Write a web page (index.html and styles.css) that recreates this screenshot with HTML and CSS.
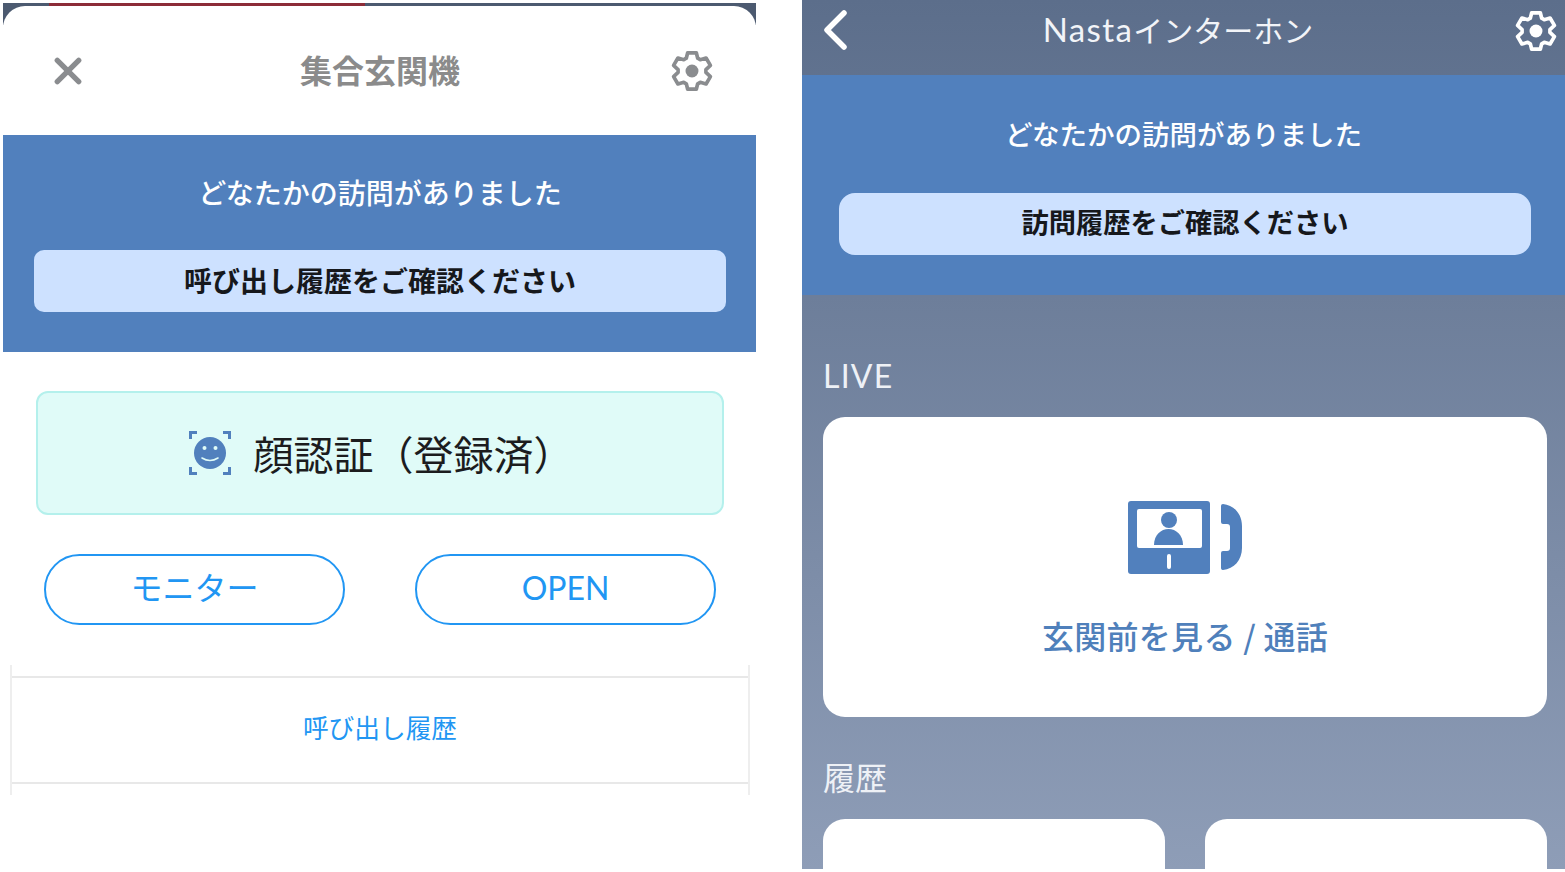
FILE: index.html
```html
<!DOCTYPE html>
<html lang="ja">
<head>
<meta charset="utf-8">
<title>Nastaインターホン</title>
<link rel="stylesheet" href="styles.css">
</head>
<body>
<svg class="defs" width="0" height="0" aria-hidden="true">
  <symbol id="gear" viewBox="0 0 24 24">
    <path class="gear-line" d="M8.75 4.69 9.53 1.6H14.47L15.25 4.69 16.7 5.53 20.04 4.6 22.52 8.78 19.96 11.16V12.84L22.52 15.22 20.04 19.4 16.7 18.47 15.25 19.31 14.47 22.4H9.53L8.75 19.31 7.3 18.47 3.96 19.4 1.48 15.22 4.04 12.84V11.16L1.48 8.78 3.96 4.6 7.3 5.53Z"/>
    <circle class="gear-dot" cx="12" cy="12" r="3.7"/>
  </symbol>
</svg>
<main class="page">
  <section class="sheet">
    <div class="sheet-edge"></div>
    <div class="sheet-inner">
      <header class="sheet-head">
        <svg class="close-icon" viewBox="0 0 28 28"><path d="M4 4 24 24M24 4 4 24"/></svg>
        <h1 class="sheet-title">集合玄関機</h1>
        <svg class="gear gear-gray"><use href="#gear"/></svg>
      </header>
      <div class="notice notice-left">
        <p class="notice-text">どなたかの訪問がありました</p>
        <div class="notice-pill pill-left">呼び出し履歴をご確認ください</div>
      </div>
      <div class="sheet-body">
        <div class="face-box">
          <svg class="face-icon" viewBox="0 0 42 44">
            <path class="face-corner" d="M1.5 8V1.5H8M34 1.5H40.5V8M40.5 36V42.5H34M8 42.5H1.5V36"/>
            <circle class="face-disc" cx="21" cy="22" r="16"/>
            <circle class="face-eye" cx="15.5" cy="17" r="2"/>
            <circle class="face-eye" cx="26.5" cy="17" r="2"/>
            <path class="face-smile" d="M13 27Q21 32 29 27"/>
          </svg>
          <span class="face-text">顔認証（登録済）</span>
        </div>
        <div class="actions">
          <button class="action">モニター</button>
          <button class="action action-latin">OPEN</button>
        </div>
      </div>
      <div class="history-row">
        <div class="history-cell">呼び出し履歴</div>
      </div>
    </div>
  </section>

  <section class="app">
    <header class="app-head">
      <svg class="back-icon" viewBox="0 0 26 40"><path d="M22 3 5 20 22 37"/></svg>
      <h2 class="app-title"><span class="latin nasta">Nasta</span>インターホン</h2>
      <svg class="gear gear-white"><use href="#gear"/></svg>
    </header>
    <div class="notice notice-right">
      <p class="notice-text">どなたかの訪問がありました</p>
      <div class="notice-pill pill-right">訪問履歴をご確認ください</div>
    </div>
    <div class="app-body">
      <h3 class="section-label label-live latin">LIVE</h3>
      <div class="live-card">
        <svg class="intercom" viewBox="0 0 114 75">
          <rect class="ic-blue" x="0" y="1" width="82" height="73" rx="3"/>
          <rect class="ic-white" x="9" y="9" width="65" height="39" rx="2"/>
          <circle class="ic-blue" cx="41" cy="20" r="8"/>
          <path class="ic-blue" d="M26 45C26 35 33 29 40.5 29 48 29 55 35 55 45Z"/>
          <rect class="ic-white" x="39" y="54" width="4" height="15" rx="2"/>
          <path class="ic-blue" d="M93 6Q93 4 95 4C106 5 114 14 114 26V48C114 60 106 69 95 70 93 70 93 68 93 68V53Q93 51 95 51H99Q102 51 102 48V27Q102 24 99 24H95Q93 24 93 22Z"/>
        </svg>
        <p class="live-text">玄関前を見る / 通話</p>
      </div>
      <h3 class="section-label label-history">履歴</h3>
      <div class="history-cards">
        <div class="history-card"></div>
        <div class="history-card"></div>
      </div>
    </div>
  </section>
</main>
</body>
</html>
```
FILE: styles.css
```css
* { box-sizing: border-box; }
html, body { margin: 0; padding: 0; background: #fff; }
body {
  width: 1565px;
  height: 872px;
  overflow: hidden;
  font-family: "Noto Sans CJK JP", "Noto Sans", sans-serif;
}
.defs { position: absolute; }
.latin { font-family: "Lato", "Noto Sans CJK JP", sans-serif; }
h1, h2, h3, p { margin: 0; font-weight: 400; }

.page { display: flex; align-items: flex-start; gap: 46px; padding-left: 3px; }

.gear { width: 42px; height: 42px; display: block; }
.gear-line { fill: none; stroke: currentColor; stroke-width: 2.1; stroke-linejoin: round; }
.gear-dot { fill: currentColor; }
.gear-gray { color: #8a8c8f; }
.gear-white { color: #fff; }

/* left sheet */
.sheet {
  position: relative;
  width: 753px;
  margin-top: 3px;
  padding-top: 3px;
  background: linear-gradient(#4c5a70 0, #4c5a70 22px, #fff 22px);
}
.sheet-edge {
  position: absolute;
  top: 0;
  left: 46px;
  width: 316px;
  height: 3px;
  background: #8c2c38;
}
.sheet-inner { background: #fff; border-radius: 22px 22px 0 0; }
.sheet-head {
  height: 129px;
  display: flex;
  align-items: center;
  justify-content: space-between;
  padding: 0 43px 0 50px;
}
.close-icon { width: 30px; height: 30px; fill: none; stroke: #8a8c8f; stroke-width: 5; stroke-linecap: round; }
.sheet-title { font-size: 32px; font-weight: 700; color: #8b8b8b; line-height: 1; margin: -4px 1px 0 7px; }

.notice {
  background: #5180bd;
  color: #fff;
  text-align: center;
}
.notice-text { font-size: 28px; font-weight: 500; line-height: 40px; }
.notice-left { height: 217px; padding: 37px 30px 0 31px; }
.notice-right { height: 220px; padding: 38px 34px 0 37px; }
.notice-right .notice-text { font-size: 27.5px; margin-left: -3px; }
.notice-pill {
  height: 62px;
  background: #cde1ff;
  color: #16181c;
  font-size: 28px;
  font-weight: 700;
}
.pill-left { margin-top: 38px; border-radius: 10px; line-height: 60px; }
.pill-right { margin-top: 40px; border-radius: 16px; font-size: 27.25px; line-height: 57px; }

.sheet-body { padding: 39px 32px 0 33px; }
.face-box {
  height: 124px;
  display: flex;
  align-items: center;
  justify-content: center;
  gap: 23px;
  background: #e0fbf8;
  border: 2px solid #b4f0ec;
  border-radius: 12px;
}
.face-icon { width: 42px; height: 44px; }
.face-corner { fill: none; stroke: #5180bd; stroke-width: 3; }
.face-disc { fill: #5180bd; }
.face-eye { fill: #e0fbf8; }
.face-smile { fill: none; stroke: #e0fbf8; stroke-width: 1.6; stroke-linecap: round; }
.face-text { font-size: 40px; color: #1c1c1e; line-height: 1; padding-bottom: 1px; margin-right: -2px; }

.actions { display: flex; justify-content: center; gap: 70px; margin-top: 39px; }
.action {
  width: 301px;
  height: 71px;
  padding: 0 0 7px;
  background: #fff;
  border: 2px solid #2196f3;
  border-radius: 36px;
  color: #2196f3;
  font-family: inherit;
  font-size: 32px;
}
.action-latin { font-family: "Lato", sans-serif; padding-bottom: 4px; }

.history-row {
  width: 740px;
  height: 130px;
  margin: 40px 0 0 7px;
  padding: 11px 0;
  border: solid #eeeeee;
  border-width: 0 2px;
}
.history-cell {
  height: 108px;
  border: solid #e8e8e8;
  border-width: 2px 0;
  color: #2196f3;
  font-size: 25.7px;
  line-height: 98px;
  text-align: center;
}

/* right app */
.app {
  width: 763px;
  height: 869px;
  overflow: hidden;
  background: linear-gradient(#5c6e8b 0, #8e9db7 100%);
  color: #fff;
}
.app-head {
  height: 75px;
  display: flex;
  align-items: center;
  padding: 0 8px 0 20px;
}
.back-icon { width: 26px; height: 40px; fill: none; stroke: #fff; stroke-width: 5.5; stroke-linecap: round; stroke-linejoin: round; margin-top: -15px; }
.app-title { flex: 1; font-size: 30px; text-align: center; line-height: 1; margin-top: -16px; padding-right: 7px; color: #f2f4f8; }
.nasta { font-size: 33px; letter-spacing: 1.4px; }
.app-head .gear { margin-top: -13px; }

.app-body { padding: 0 18px 0 21px; }
.section-label { font-size: 32px; line-height: 40px; color: #eef1f6; }
.label-live { padding-top: 61px; letter-spacing: 1.2px; }
.label-history { padding-top: 39px; }
.live-card {
  height: 300px;
  margin-top: 21px;
  padding-top: 83px;
  background: #fff;
  border-radius: 22px;
  text-align: center;
}
.intercom { display: block; width: 114px; height: 75px; margin: 0 auto; }
.ic-blue { fill: #5180bd; }
.ic-white { fill: #fff; }
.live-text { margin-top: 35px; font-size: 32px; font-weight: 500; letter-spacing: 0.3px; line-height: 50px; color: #4f80bb; }
.history-cards { display: flex; gap: 40px; margin-top: 23px; }
.history-card { flex: 1; height: 100px; background: #fff; border-radius: 22px; }
```
